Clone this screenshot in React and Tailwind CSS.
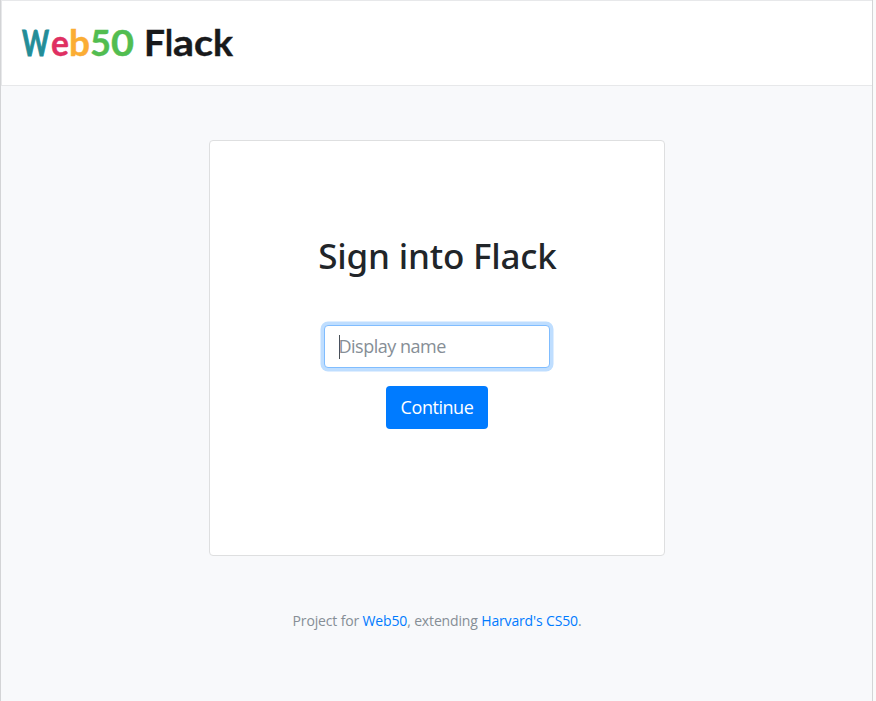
const glyphs = [
  ['W', 20, 27, '#238d98'],
  ['e', 49, 18, '#df3062'],
  ['b', 67, 21, '#fbad34'],
  ['5', 88, 21, '#52bd50'],
  ['0', 109, 23, '#52bd50'],
  ['F', 142, 21, '#18191b'],
  ['l', 163, 8, '#18191b'],
  ['a', 171, 21, '#18191b'],
  ['c', 192, 19, '#18191b'],
  ['k', 211, 20, '#18191b'],
];

function Logo() {
  return (
    <svg width="240" height="84" aria-label="Web50 Flack" className="block shrink-0 font-['Lato',sans-serif] text-[36px] font-bold">
      {glyphs.map(([char, x, width, color]) => (
        <text key={x} x={x} y="55" textLength={width} lengthAdjust="spacingAndGlyphs" fill={color} stroke={color} strokeWidth={char === 'W' ? 0.9 : 0.4}>
          {char}
        </text>
      ))}
    </svg>
  );
}

export default function App() {
  return (
    <div className="flex h-[701px] w-[876px] bg-[#fafafa] font-['Open_Sans','Noto_Sans',sans-serif]">
      <div className="flex w-[873px] flex-col border-x border-[#d3d4d6] bg-[#f8f9fb]">
        <header className="h-[86px] border-y border-l border-[#e7e8ea] bg-white">
          <Logo />
        </header>
        <main className="flex flex-col items-center">
          <form className="mt-[54px] flex h-[416px] w-[456px] flex-col items-center rounded border border-[#dedfe0] bg-white" onSubmit={(e) => e.preventDefault()}>
            <h1 className="mt-[91px] whitespace-nowrap pl-[2px] font-['Noto_Sans',sans-serif] text-[35px] leading-[48px] font-medium tracking-[-0.2px] text-[#212529]">
              Sign into Flack
            </h1>
            <div className="mt-[45px] flex h-[43px] w-[226px] items-center rounded border border-[#80bdff] bg-white pl-[14px] shadow-[0_0_0_3.5px_#bfdeff]">
              <span className="h-[24px] w-px bg-[#495057]" />
              <span className="-ml-px text-[18px] leading-[27px] tracking-[-0.5px] text-[#868e96]">Display name</span>
            </div>
            <button className="mt-[18px] h-[43px] w-[102px] rounded bg-[#007bff] pl-px text-[18px] leading-[27px] tracking-[-0.45px] text-white">
              Continue
            </button>
          </form>
          <p className="mt-[54px] whitespace-nowrap pl-px text-[14px] leading-[22px] tracking-[-0.15px] text-[#868e96]">
            Project for <a href="#web50" className="text-[#007bff]">Web50</a>, extending <a href="#cs50" className="text-[#007bff]">Harvard's CS50</a>.
          </p>
        </main>
      </div>
    </div>
  );
}
